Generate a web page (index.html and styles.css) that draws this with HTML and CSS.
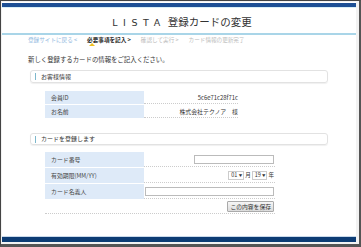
FILE: index.html
```html
<!DOCTYPE html>
<html lang="ja">
<head>
    <meta charset="UTF-8">
    <meta name="viewport" content="width=device-width, initial-scale=1.0">
    <title>LISTA 登録カードの変更</title>
    <link rel="stylesheet" href="styles.css">
</head>
<body>

    <div class="window">
        <div class="page">

            <!-- Header -->
            <div class="top-bar"></div>
            <div class="header">
                <h1 class="title"><span class="brand">LISTA</span>登録カードの変更</h1>
            </div>

            <!-- Steps -->
            <ul class="steps">
                <li class="step step-back">登録サイトに戻る &lt;</li>
                <li class="step step-current">必要事項を記入 &gt;</li>
                <li class="step">確認して実行 &gt;</li>
                <li class="step">カード情報の更新完了</li>
            </ul>

            <div class="content">
                <p class="lead">新しく登録するカードの情報をご記入ください。</p>

                <!-- Customer info -->
                <h2 class="section-title">お客様情報</h2>
                <div class="form-table info-table">
                    <div class="form-row">
                        <div class="label">会員ID</div>
                        <div class="value">5c6e71c28f71c</div>
                    </div>
                    <div class="form-row">
                        <div class="label">お名前</div>
                        <div class="value">株式会社テクノア　様</div>
                    </div>
                </div>

                <!-- Card form -->
                <h2 class="section-title section-card">カードを登録します</h2>
                <div class="form-table card-table">
                    <div class="form-row">
                        <div class="label">カード番号</div>
                        <div class="value"><input type="text" class="input input-short"></div>
                    </div>
                    <div class="form-row">
                        <div class="label">有効期限(MM/YY)</div>
                        <div class="value">
                            <span class="select">01 <i>▼</i></span><span class="unit">月</span><span class="select">19 <i>▼</i></span><span class="unit">年</span>
                        </div>
                    </div>
                    <div class="form-row">
                        <div class="label">カード名義人</div>
                        <div class="value"><input type="text" class="input input-long"></div>
                    </div>
                    <div class="form-row button-row">
                        <div class="label"></div>
                        <div class="value"><button class="save-button">この内容を保存</button></div>
                    </div>
                </div>
            </div>

            <div class="bottom-bar"></div>
        </div>
    </div>

</body>
</html>
```

FILE: styles.css
```css
/* General Styles */
body {
    margin: 0;
    padding: 0;
    font-family: "Noto Sans CJK JP", "Noto Sans", sans-serif;
    color: #333;
    background: #fff;
}

.window {
    width: 361px;
    height: 247px;
    box-sizing: border-box;
    border: 1px solid #444;
    border-right: 2px solid #555;
    border-bottom: 3px solid #555;
    padding: 1px 3px 2px 1px;
    background: #f2f2f2;
    overflow: hidden;
}

.page {
    height: 100%;
    background: #fff;
    display: flex;
    flex-direction: column;
}

/* Header */
.top-bar {
    height: 5px;
    margin-top: 1px;
    background: #1d4f95;
}

.header {
    height: 25px;
    border-bottom: 2px solid #a9d5e8;
    box-shadow: 0 -1px 0 #d8eef6;
    display: flex;
    align-items: center;
    justify-content: center;
}

.title {
    margin: 2px 0 0 6px;
    font-size: 10.5px;
    font-weight: normal;
    color: #333;
}

.brand {
    letter-spacing: 5.6px;
    font-family: "DejaVu Sans", sans-serif;
    font-size: 9.5px;
    margin-right: 2px;
}

/* Steps */
.steps {
    list-style: none;
    margin: 0;
    padding: 1px 0 0 26px;
    display: flex;
    gap: 10px;
    height: 10px;
}

.step {
    font-size: 5.6px;
    color: #bbb;
    line-height: 8px;
    white-space: nowrap;
}

.step-back {
    color: #8fb8e0;
}

.step-current {
    color: #222;
    font-weight: bold;
    position: relative;
}

.step-current::after {
    content: "";
    position: absolute;
    left: 2px;
    top: 7px;
    border-left: 3px solid transparent;
    border-right: 3px solid transparent;
    border-bottom: 3px solid #f0c020;
}

/* Content */
.content {
    flex: 1;
    padding: 0 0 0 26px;
}

.lead {
    margin: 10px 0 0;
    font-size: 6.4px;
    line-height: 8px;
    color: #333;
}

.section-title {
    margin: 6px 0 0 2px;
    width: 298px;
    height: 13px;
    box-sizing: border-box;
    border: 1px solid #e2e2e2;
    border-radius: 3px;
    box-shadow: 0 1px 1px #f0f0f0;
    font-size: 6px;
    font-weight: normal;
    line-height: 11px;
    padding-left: 10px;
    position: relative;
    color: #333;
}

.section-title::before {
    content: "";
    position: absolute;
    left: 4px;
    top: 2px;
    width: 1px;
    height: 7px;
    background: #7db8cc;
}

.section-card {
    margin-top: 15px;
    height: 12px;
    line-height: 10px;
}

/* Form rows */
.form-table {
    margin: 8px 0 0 17px;
    display: flex;
    flex-direction: column;
    gap: 1px;
    font-size: 5.9px;
}

.form-row {
    display: grid;
    grid-template-columns: 99px 94px;
    height: 13px;
}

.label {
    background: #deeaf8;
    padding-left: 6px;
    display: flex;
    align-items: center;
    color: #444;
}

.value {
    border-bottom: 1px dotted #ccc;
    display: flex;
    align-items: center;
    justify-content: flex-end;
    color: #333;
}

.card-table {
    margin-top: 7px;
}

.card-table .form-row {
    grid-template-columns: 99px 131px;
    height: 15px;
}

.card-table .button-row {
    height: 16px;
}

.button-row .label {
    background: none;
}

.button-row .value {
    grid-column: 1 / 3;
    grid-row: 1;
}

.input {
    box-sizing: border-box;
    height: 9px;
    border: 1px solid #bbb;
    padding: 0;
    margin: 0 1px 0 0;
}

.input-short {
    width: 80px;
}

.input-long {
    width: 129px;
}

.select {
    display: inline-block;
    box-sizing: border-box;
    height: 9px;
    border: 1px solid #ccc;
    padding: 0 1px 0 2px;
    font-size: 5.5px;
    line-height: 7px;
    background: #fff;
}

.select i {
    font-style: normal;
    font-size: 3.5px;
}

.unit {
    font-size: 5.5px;
    margin: 0 1px;
}

.save-button {
    height: 11px;
    padding: 0 2px;
    border: 1px solid #aaa;
    border-radius: 1px;
    background: linear-gradient(#f6f6f6, #dcdcdc);
    font-family: "Noto Sans CJK JP", sans-serif;
    font-size: 5.8px;
    line-height: 8px;
    color: #333;
    margin-right: 1px;
}

/* Footer bar */
.bottom-bar {
    height: 5px;
    background: #0d3c74;
    box-shadow: 0 -1px 0 #c9d9ea;
}
```
